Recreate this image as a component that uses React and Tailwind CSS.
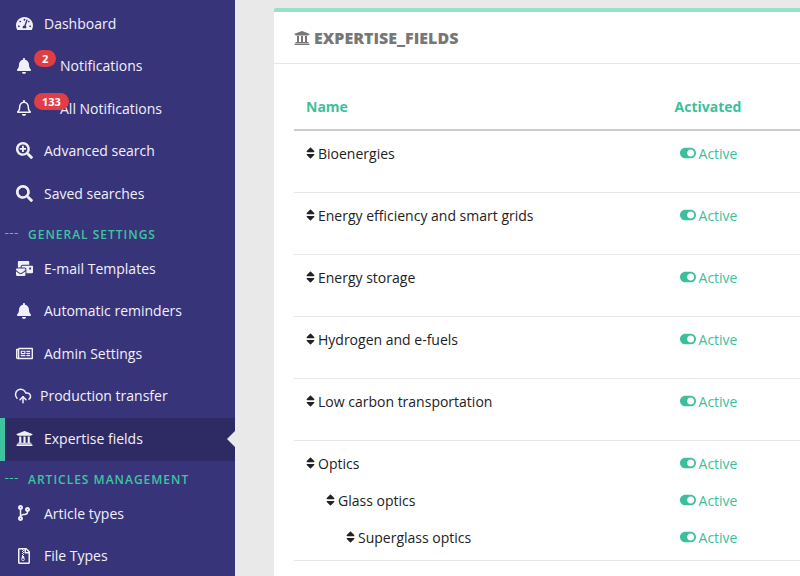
import React from "react";
import {
  FaTachometerAlt,
  FaBell,
  FaRegBell,
  FaSearchPlus,
  FaSearch,
  FaMailBulk,
  FaRegNewspaper,
  FaUniversity,
  FaCodeBranch,
  FaRegFileArchive,
  FaSort,
  FaToggleOn,
} from "react-icons/fa";
import { LuCloudUpload } from "react-icons/lu";

const NavItem = ({ icon: Icon, label, badge, active, textClass = "ml-[12px]", iconClass = "w-[17px] h-[17px]" }) => (
  <div
    className={`relative flex items-center h-[42.5px] pb-[2px] text-[14px] text-[#f1f0fa] ${
      active ? "bg-[#2e2a63] border-l-[5px] border-[#3ec5a0] pl-[11px]" : "pl-[16px]"
    }`}
  >
    <span className="w-4 flex justify-center shrink-0">
      <Icon className={`shrink-0 ${iconClass}`} />
    </span>
    <span className={`whitespace-nowrap ${textClass}`}>{label}</span>
    {badge && (
      <span className="absolute left-[34px] top-[4.5px] min-w-[20px] h-[17px] px-[8px] rounded-full bg-[#e03e45] text-white text-[11px] font-bold leading-[17px] text-center">
        {badge}
      </span>
    )}
    {active && (
      <span className="absolute right-0 top-[13px] w-0 h-0 border-y-[8px] border-y-transparent border-r-[8px] border-r-[#e9e9e9]" />
    )}
  </div>
);

const SectionTitle = ({ label }) => (
  <div className="flex items-center h-[32.5px] pl-[5px] pt-[6px] text-[12px] font-semibold tracking-[1px] text-[#3ec5a0] whitespace-nowrap">
    <svg className="w-[13px] h-[1px] mr-[10px] -mt-[3px]" viewBox="0 0 13 1">
      <line x1="0" y1="0.5" x2="13" y2="0.5" stroke="#3ec5a0" strokeDasharray="3.5 1.25" />
    </svg>
    {label}
  </div>
);

const Status = () => (
  <div className="flex items-center justify-center pl-[1px] text-[14px] text-[#3dbf9c]">
    <FaToggleOn className="w-4 h-4 mr-[3px]" />
    <span>Active</span>
  </div>
);

const Line = ({ label, indent = 12 }) => (
  <div className="flex items-center h-[20px]">
    <div className="w-[322px] flex items-center text-[14px] text-[#222]" style={{ paddingLeft: indent }}>
      <FaSort className="w-[9px] h-[14px] mr-[3px]" />
      <span>{label}</span>
    </div>
    <div className="w-[184px]">
      <Status />
    </div>
  </div>
);

const fields = ["Bioenergies", "Energy efficiency and smart grids", "Energy storage", "Hydrogen and e-fuels", "Low carbon transportation"];

export default function App() {
  return (
    <div className="flex h-[576px] w-[800px] overflow-hidden bg-[#e9e9e9] font-['Open_Sans',sans-serif]">
      <aside className="w-[235px] shrink-0 bg-[#38347a] pt-[3px]">
        <NavItem icon={FaTachometerAlt} label="Dashboard" />
        <NavItem icon={FaBell} label="Notifications" badge="2" textClass="ml-[28px]" iconClass="w-4 h-4" />
        <NavItem icon={FaRegBell} label="All Notifications" badge="133" textClass="ml-[28px]" iconClass="w-4 h-4" />
        <NavItem icon={FaSearchPlus} label="Advanced search" />
        <NavItem icon={FaSearch} label="Saved searches" />
        <SectionTitle label="GENERAL SETTINGS" />
        <NavItem icon={FaMailBulk} label="E-mail Templates" />
        <NavItem icon={FaBell} label="Automatic reminders" iconClass="w-4 h-4" />
        <NavItem icon={FaRegNewspaper} label="Admin Settings" />
        <NavItem icon={LuCloudUpload} label="Production transfer" textClass="ml-[8px]" iconClass="w-[18px] h-[18px] -ml-[2px]" />
        <NavItem icon={FaUniversity} label="Expertise fields" active />
        <SectionTitle label="ARTICLES MANAGEMENT" />
        <NavItem icon={FaCodeBranch} label="Article types" iconClass="w-4 h-4" />
        <NavItem icon={FaRegFileArchive} label="File Types" iconClass="w-4 h-4" />
      </aside>

      <main className="flex-1 pl-[39px] pt-[8px] min-w-0">
        <div className="h-full bg-white border-t-4 border-[#98e0c9] rounded-tl-[2px]">
          <div className="h-[52px] flex items-center pl-[20px] border-b border-[#e6e6e6] text-[#777]">
            <FaUniversity className="w-4 h-4 mr-[4px]" />
            <span className="text-[16px] font-extrabold">EXPERTISE_FIELDS</span>
          </div>
          <div className="pl-[20px]">
            <div className="flex items-center h-[67px] pt-[19px] border-b-2 border-[#ccc] text-[14px] font-bold text-[#3dbf9c]">
              <div className="w-[322px] pl-[12px]">Name</div>
              <div className="w-[184px] text-center">Activated</div>
            </div>
            {fields.map((name) => (
              <div key={name} className="h-[62px] pt-[12px] border-b border-[#e6e6e6]">
                <Line label={name} />
              </div>
            ))}
            <div className="h-[120px] pt-[12px] border-b border-[#e6e6e6] flex flex-col gap-[17px]">
              <Line label="Optics" />
              <Line label="Glass optics" indent={32} />
              <Line label="Superglass optics" indent={52} />
            </div>
          </div>
        </div>
      </main>
    </div>
  );
}
